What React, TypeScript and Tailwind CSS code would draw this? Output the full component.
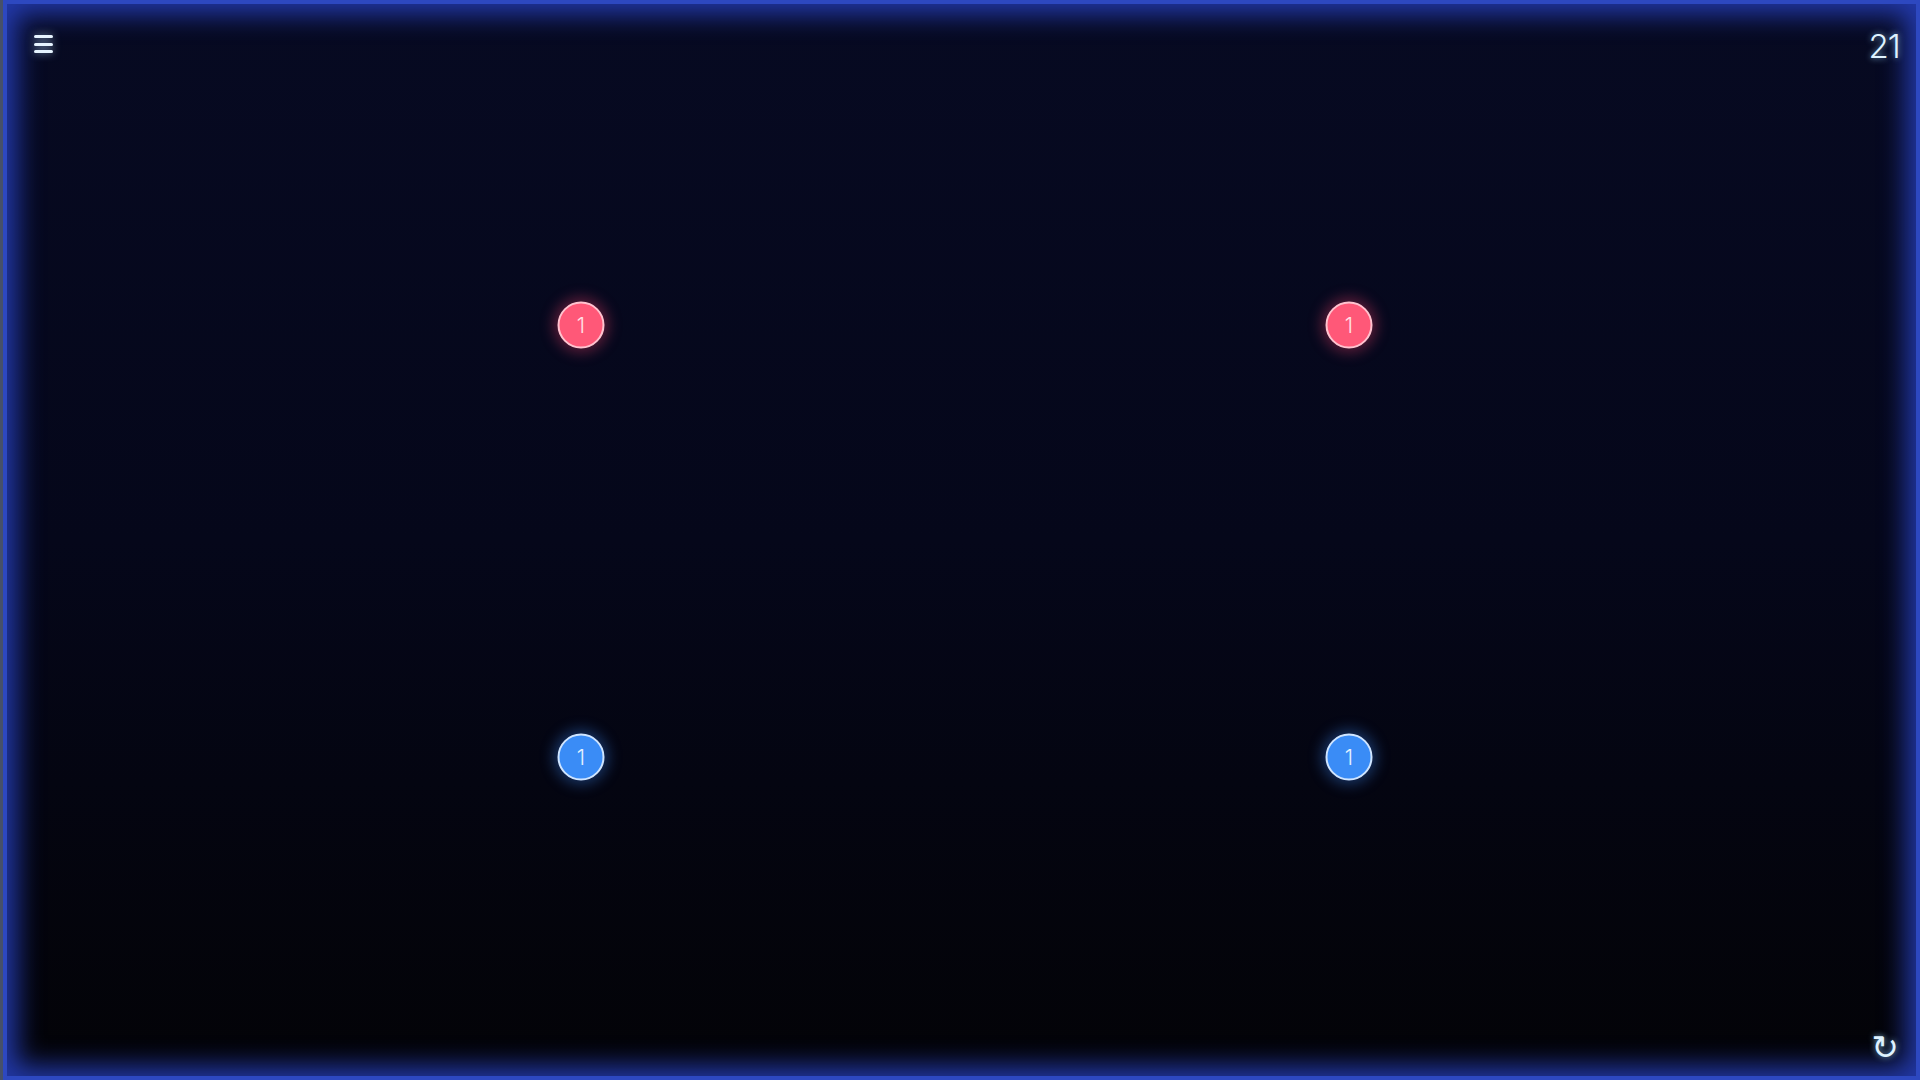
const pieces = [
  { id: "r1", x: 580, y: 325, team: "red" as const, value: 1 },
  { id: "r2", x: 1348, y: 325, team: "red" as const, value: 1 },
  { id: "b1", x: 580, y: 757, team: "blue" as const, value: 1 },
  { id: "b2", x: 1348, y: 757, team: "blue" as const, value: 1 },
];

const teamStyles = {
  red: "bg-[#ff5878] border-[#ffc3cf] text-[#ffe0e6] shadow-[0_0_14px_4px_rgba(255,70,110,0.35)]",
  blue: "bg-[#3a8cf6] border-[#cfe5ff] text-[#e4f1ff] shadow-[0_0_14px_4px_rgba(60,140,255,0.35)]",
};

function App() {
  return (
    <main className="h-screen w-screen overflow-hidden bg-[#46506a] pl-[3px] font-['Inter','Liberation_Sans',sans-serif]">
      <div className="relative h-full w-full border-[4px] border-[#2d48c0] bg-gradient-to-b from-[#070a22] via-[#05071a] to-[#030307] shadow-[inset_0_0_26px_10px_rgba(40,66,195,0.85)]">
        <header className="flex items-start justify-between pl-[27px] pr-[30px] pt-[30px]">
          <button className="flex h-[20px] w-[20px] flex-col justify-between py-[1px] drop-shadow-[0_0_4px_rgba(180,220,255,0.7)]">
            <span className="block h-[3px] w-[19px] rounded-full bg-[#e6f4ff]" />
            <span className="block h-[3px] w-[19px] rounded-full bg-[#e6f4ff]" />
            <span className="block h-[3px] w-[19px] rounded-full bg-[#e6f4ff]" />
          </button>
          <div className="-mr-[14px] -mt-[4px] text-[33px] font-light leading-none tracking-tight text-[#dff2ff] [text-shadow:0_0_6px_rgba(150,210,255,0.8)]">
            21
          </div>
        </header>

        {pieces.map((piece) => (
          <div
            key={piece.id}
            className={`absolute flex h-[47px] w-[47px] -translate-x-1/2 -translate-y-1/2 items-center justify-center rounded-full border-[2px] text-[21px] font-light ${teamStyles[piece.team]}`}
            style={{ left: piece.x - 6, top: piece.y - 4 }}
          >
            {piece.value}
          </div>
        ))}

        <button className="absolute bottom-[12px] right-[17px] text-[33px] leading-none text-[#dff2ff] [text-shadow:0_0_6px_rgba(150,210,255,0.8)] font-['DejaVu_Sans',sans-serif]">
          ↻
        </button>
      </div>
    </main>
  );
}

export default App;
